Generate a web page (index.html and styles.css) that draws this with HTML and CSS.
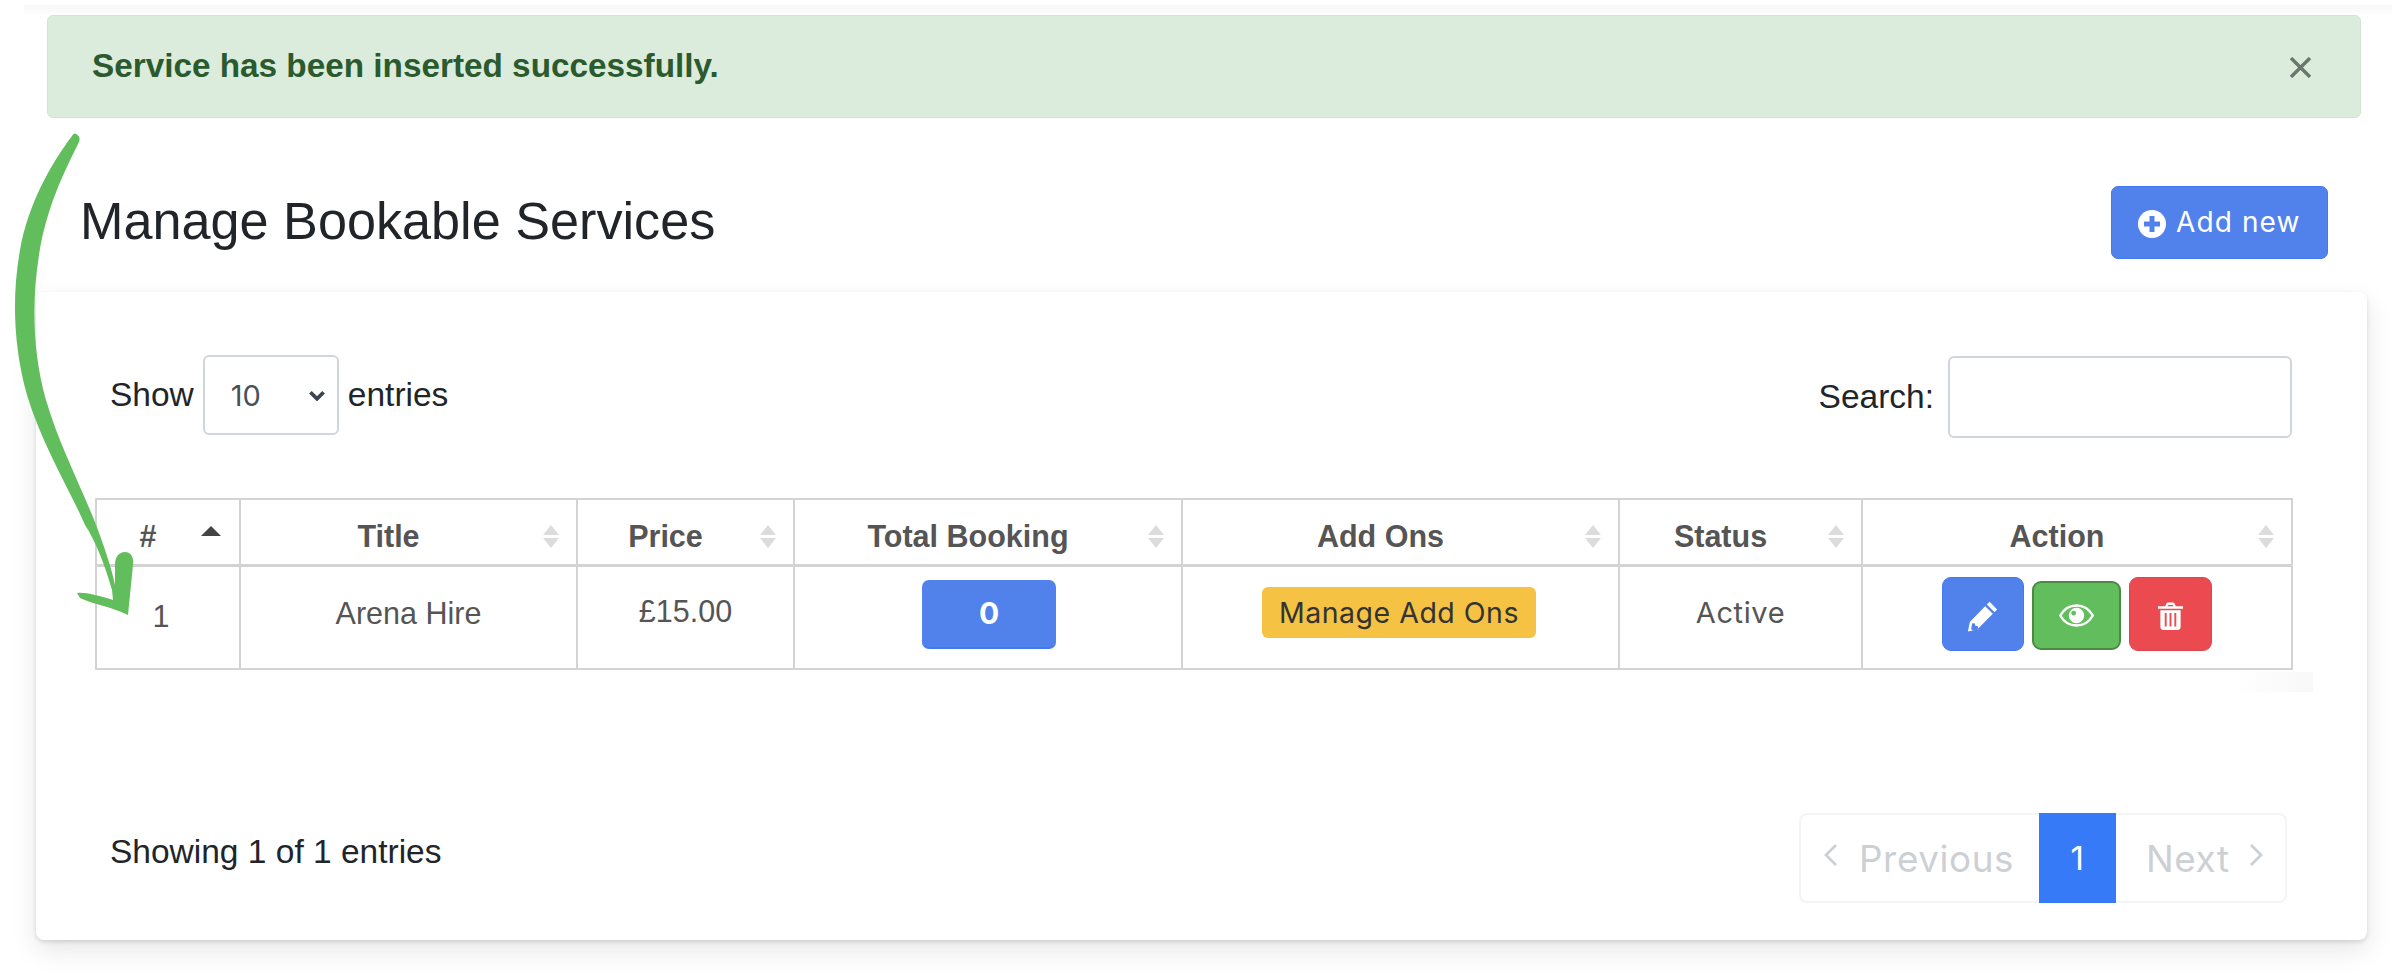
FILE: index.html
```html
<!DOCTYPE html>
<html lang="en">
<head>
<meta charset="utf-8">
<title>Manage Bookable Services</title>
<link rel="stylesheet" href="styles.css">
</head>
<body>
<div class="topband"></div>
<div class="alert">
  <strong>Service has been inserted successfully.</strong>
  <svg class="close" viewBox="0 0 20 20" aria-hidden="true"><path d="M1 1 19 19M19 1 1 19"/></svg>
</div>
<div class="page-head">
  <h1>Manage Bookable Services</h1>
  <a class="btn-add">
    <svg viewBox="0 0 28 28" aria-hidden="true"><circle cx="14" cy="14" r="14" fill="#fff"/><path d="M11.5 6h5v5.500h5.500v5h-5.500v5.500h-5v-5.500h-5.500v-5h5.500z" fill="#5182ec"/></svg>
    <span>Add new</span>
  </a>
</div>
<section class="card">
  <div class="toolbar">
    <div class="length">
      <span>Show</span>
      <div class="select"><span>10</span>
        <svg viewBox="0 0 16 10" aria-hidden="true"><path d="M2 2 8 8 14 2"/></svg>
      </div>
      <span>entries</span>
    </div>
    <div class="search">
      <span>Search:</span>
      <div class="input"></div>
    </div>
  </div>
  <div class="table-wrap">
    <table>
      <colgroup>
        <col class="c1"><col class="c2"><col class="c3"><col class="c4"><col class="c5"><col class="c6"><col class="c7">
      </colgroup>
      <thead>
        <tr>
          <th class="sorted">#</th>
          <th>Title</th>
          <th>Price</th>
          <th>Total Booking</th>
          <th>Add Ons</th>
          <th>Status</th>
          <th>Action</th>
        </tr>
      </thead>
      <tbody>
        <tr>
          <td class="cell-num">1</td>
          <td class="cell-title">Arena Hire</td>
          <td class="cell-price">£15.00</td>
          <td class="cell-raise"><a class="btn-count">0</a></td>
          <td class="cell-addons"><a class="btn-addons">Manage Add Ons</a></td>
          <td class="cell-status">Active</td>
          <td class="cell-raise">
            <div class="actions">
              <a class="act act-edit">
                <svg viewBox="0 0 30 30" aria-hidden="true"><path d="M20.500 3.200 26.800 9.500 24.600 11.800 18.200 5.400zM16.800 6.800 23.200 13.200 10.200 26.200 2.400 28 4 20zM6 21l-.9 4.800 1.600 1.300 4.400-1.100-.6-2.600-2-.2-.2-2z" fill="#fff" fill-rule="evenodd"/></svg>
              </a>
              <a class="act act-view">
                <svg viewBox="0 0 36 24" aria-hidden="true"><path d="M1 12C5 5 11 1.500 18 1.500S31 5 35 12c-4 7-10 10.500-17 10.500S5 19 1 12z" fill="none" stroke="#fff" stroke-width="2.600"/><path d="M18 4a8 8 0 1 1-.01 0zM15 7a2.500 2.500 0 1 0 .01 0z" fill="#fff" fill-rule="evenodd"/></svg>
              </a>
              <a class="act act-del">
                <svg viewBox="0 0 28 30" aria-hidden="true"><path d="M1 5h7.500l1-2.500C10 1.500 11 1 12 1h4c1 0 2 .5 2.500 1.500l1 2.500H27v2.500H1zM11 5h6l-.7-1.500h-4.600zM3.500 9h21v17.500c0 1.700-1.300 3-3 3h-15c-1.700 0-3-1.300-3-3zM8 12v14h2V12zM13 12v14h2V12zM18 12v14h2V12z" fill="#fff" fill-rule="evenodd"/></svg>
              </a>
            </div>
          </td>
        </tr>
      </tbody>
    </table>
  </div>
  <div class="card-foot">
    <div class="info">Showing 1 of 1 entries</div>
    <nav class="pager">
      <a class="page-prev">
        <svg viewBox="0 0 14 24" aria-hidden="true"><path d="M12 2 2 12 12 22"/></svg>
        <span>Previous</span>
      </a>
      <a class="page-cur">1</a>
      <a class="page-next">
        <span>Next</span>
        <svg viewBox="0 0 14 24" aria-hidden="true"><path d="M2 2 12 12 2 22"/></svg>
      </a>
    </nav>
  </div>
</section>
<svg class="arrow" viewBox="0 0 140 620" aria-hidden="true">
  <path d="M76 134C80 136 80 139 79 142C62 176 46 210 39 255C32 300 32 350 46 400C59 445 83 490 98 530C106 552 112 570 115 585L115 565C115 557 119 552 125 552C131 552 134 557 133 565L128 615C110 606 92 604 80 598L77 593C85 592 100 596 113 600L112 590C105 565 95 540 85 525C70 490 42 445 27 395C13 345 12 295 20 250C28 205 50 165 72 136C73 134 75 133 76 134Z"/>
</svg>
</body>
</html>
```

FILE: styles.css
```css
* { box-sizing: border-box; }
html, body { margin: 0; padding: 0; background: #fff; }
body {
  position: relative;
  width: 2396px;
  height: 978px;
  overflow: hidden;
  font-family: "Liberation Sans", Arial, sans-serif;
  font-size: 33.500px;
  color: #212529;
}

.topband {
  height: 10px;
  margin: 5px 4px 0 24px;
  background: linear-gradient(#f6f6f6, #fefefe);
}

.alert {
  display: flex;
  align-items: center;
  justify-content: space-between;
  width: 2314px;
  height: 103px;
  margin-left: 47px;
  padding: 0 49px 2px 44px;
  background: #dbecdd;
  border: 1px solid #cde5d2;
  border-radius: 6px;
  color: #2a5a2e;
  font-size: 33.300px;
}
.close { width: 21px; height: 21px; margin-top: 4px; }
.close path { fill: none; stroke: #6b766d; stroke-width: 3.200; }

.page-head {
  display: flex;
  align-items: center;
  justify-content: space-between;
  height: 73px;
  margin: 68px 68px 33px 80px;
}
h1 {
  margin: 0 0 3px;
  font-size: 52.200px;
  font-weight: 400;
  line-height: 1.2;
  color: #212529;
}
.btn-add {
  display: flex;
  align-items: center;
  gap: 10px;
  width: 217px;
  height: 73px;
  padding: 0 0 2px 26px;
  background: #5182ec;
  border: 1px solid #4279f3;
  border-radius: 7px;
  color: #fff;
  font-family: Inter, "Liberation Sans", sans-serif;
  font-size: 28px;
  letter-spacing: 1.100px;
}
.btn-add svg { width: 28px; height: 28px; flex: none; margin-top: 4px; }

.card {
  width: 2331px;
  height: 648px;
  margin-left: 36px;
  padding: 63px 76px 37px 59px;
  background: #fff;
  border-radius: 8px;
  box-shadow: 0 2px 4px rgba(0,0,0,.12), 0 10px 26px rgba(0,0,0,.1);
}

.toolbar {
  display: flex;
  justify-content: space-between;
  align-items: flex-start;
  height: 84px;
  margin: 0 -1px 59px 0;
  padding: 0 0 0 15px;
}
.length { display: flex; align-items: center; height: 80px; gap: 9px; }
.select {
  display: flex;
  align-items: center;
  justify-content: space-between;
  width: 136px;
  height: 80px;
  padding: 0 11px 0 26px;
  border: 2px solid #d0d6dc;
  border-radius: 6px;
  color: #495057;
  font-family: Inter, "Liberation Sans", sans-serif;
  font-size: 29px;
}
.select svg { width: 18px; height: 11px; }
.select path { fill: none; stroke: #3c4650; stroke-width: 3.400; }
.search { display: flex; align-items: center; height: 82px; margin-top: 1px; gap: 14px; }
.input {
  width: 344px;
  height: 82px;
  border: 2px solid #d0d6dc;
  border-radius: 6px;
}

.table-wrap { position: relative; }
.table-wrap::after {
  content: "";
  position: absolute;
  right: -22px;
  bottom: -22px;
  width: 80px;
  height: 20px;
  background: linear-gradient(100deg, #fff, #f8f8f8);
}
table {
  width: 2196px;
  table-layout: fixed;
  border-collapse: collapse;
  color: #555;
}
.c1 { width: 144px; } .c2 { width: 337px; } .c3 { width: 217px; } .c4 { width: 388px; }
.c5 { width: 437px; } .c6 { width: 243px; } .c7 { width: 430px; }

th, td { border: 3px solid #d3d3d3; text-align: center; padding: 0; }
td { border-width: 2px; border-top-width: 3px; }
th {
  position: relative;
  height: 66px;
  padding: 10px 40px 0 0;
  font-size: 30.500px;
  font-weight: 700;
  border-width: 2px 2px 3px;
}
th::before, th::after {
  content: "";
  position: absolute;
  right: 17px;
  width: 0;
  height: 0;
  border-left: 8px solid transparent;
  border-right: 8px solid transparent;
}
th::before { top: 25px; border-bottom: 10px solid #dcdcdc; }
th::after { top: 38px; border-top: 10px solid #dcdcdc; }
th.sorted::before { right: 18px; top: 26px; border-left-width: 10px; border-right-width: 10px; border-bottom: 10px solid #444; }
th.sorted::after { display: none; }

td { height: 104px; font-size: 30.500px; }
.cell-num { padding: 0 14px 2px 0; }
.cell-title { padding-bottom: 8px; }
.cell-price { padding: 0 0 12px 0; }
.cell-raise { padding-bottom: 6px; }
.cell-addons { padding-bottom: 10px; }
.cell-status {
  padding-bottom: 10px;
  font-family: Inter, "Liberation Sans", sans-serif;
  font-size: 29px;
  letter-spacing: .6px;
}

.btn-count {
  display: inline-flex;
  align-items: center;
  justify-content: center;
  width: 134px;
  height: 69px;
  margin-left: 2px;
  background: #5182ec;
  border-bottom: 2px solid #4279f3;
  border-radius: 7px;
  color: #fff;
  font-family: Inter, "Liberation Sans", sans-serif;
  font-size: 30px;
  font-weight: 700;
  vertical-align: middle;
}
.btn-addons {
  display: inline-flex;
  align-items: center;
  justify-content: center;
  width: 274px;
  height: 51px;
  margin-right: 3px;
  background: #f6c243;
  border-radius: 6px;
  color: #333;
  font-family: Inter, "Liberation Sans", sans-serif;
  font-size: 28.500px;
  letter-spacing: .5px;
  vertical-align: middle;
}

.actions { display: flex; justify-content: center; align-items: center; gap: 8px; }
.act {
  display: flex;
  align-items: center;
  justify-content: center;
  height: 74px;
  border-radius: 9px;
}
.act-edit { width: 82px; background: #5182ec; border: 1px solid #4279f3; }
.act-edit svg { width: 36px; height: 36px; margin-top: 4px; }
.act-view { width: 89px; height: 69px; margin-top: 3px; background: #62bd5d; border: 2px solid #4a8a44; }
.act-view svg { width: 35px; height: 23px; }
.act-del { width: 83px; background: #ec4a51; border: 1px solid #d9474e; }
.act-del svg { width: 27px; height: 30px; margin-top: 4px; }

.card-foot {
  display: flex;
  justify-content: space-between;
  align-items: center;
  margin-top: 143px;
  padding: 0 4px 0 15px;
}
.info { margin-bottom: 12px; }
.pager {
  display: flex;
  align-items: stretch;
  width: 488px;
  height: 90px;
  border: 2px solid #f3f4f6;
  border-radius: 8px;
  font-family: Inter, "Liberation Sans", sans-serif;
  font-size: 36.800px;
  letter-spacing: .6px;
  color: #ccd0d4;
}
.pager a { display: flex; align-items: center; }
.pager svg { width: 14px; height: 24px; margin-top: -7px; }
.pager path { fill: none; stroke: #ccd0d4; stroke-width: 2.800; }
.page-prev { width: 238px; padding-left: 23px; gap: 21px; }
.page-cur {
  width: 77px;
  margin: -2px 0;
  justify-content: center;
  background: #377af7;
  color: #fff;
  font-size: 33px;
}
.page-next { flex: 1; padding-left: 30px; gap: 19px; }

.arrow {
  position: absolute;
  left: 0;
  top: 0;
  width: 140px;
  height: 620px;
}
.arrow path { fill: #62bd5d; }
```
